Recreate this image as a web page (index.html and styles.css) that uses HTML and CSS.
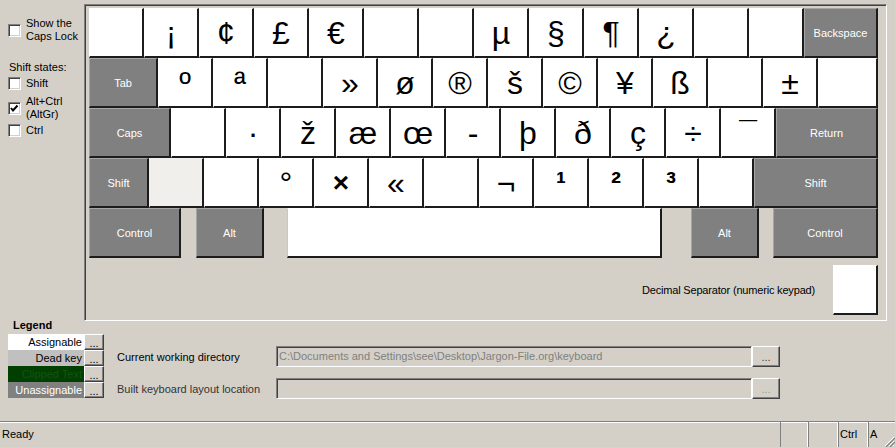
FILE: index.html
```html
<!DOCTYPE html>
<html lang="en">

<head>
    <meta charset="UTF-8">
    <title>Keyboard Layout Creator</title>
    <link rel="stylesheet" href="styles.css">
</head>

<body>
    <div class="app">
        <div class="top">
            <!-- Options column -->
            <div class="side">
                <div class="opt opt-caps">
                    <span class="box"></span>
                    <span>Show the<br>Caps Lock</span>
                </div>
                <div class="side-title">Shift states:</div>
                <div class="opt opt-shift">
                    <span class="box"></span>
                    <span>Shift</span>
                </div>
                <div class="opt opt-altgr">
                    <span class="box">
                        <svg width="11" height="11" viewBox="0 0 11 11"><path d="M2 5 L4 7.5 L8.5 2.5" fill="none" stroke="#000" stroke-width="2"/></svg>
                    </span>
                    <span>Alt+Ctrl<br>(AltGr)</span>
                </div>
                <div class="opt opt-ctrl">
                    <span class="box"></span>
                    <span>Ctrl</span>
                </div>
                <div class="legend-title">Legend</div>
            </div>

            <!-- Keyboard -->
            <div class="board">
                <div class="row">
                    <div class="key ch"></div>
                    <div class="key ch">¡</div>
                    <div class="key ch">¢</div>
                    <div class="key ch">£</div>
                    <div class="key ch">€</div>
                    <div class="key ch"></div>
                    <div class="key ch"></div>
                    <div class="key ch">µ</div>
                    <div class="key ch">§</div>
                    <div class="key ch">¶</div>
                    <div class="key ch">¿</div>
                    <div class="key ch"></div>
                    <div class="key ch"></div>
                    <div class="key mod bksp">Backspace</div>
                </div>
                <div class="row">
                    <div class="key mod tab">Tab</div>
                    <div class="key ch">º</div>
                    <div class="key ch">ª</div>
                    <div class="key ch"></div>
                    <div class="key ch">»</div>
                    <div class="key ch">ø</div>
                    <div class="key ch">®</div>
                    <div class="key ch">š</div>
                    <div class="key ch">©</div>
                    <div class="key ch">¥</div>
                    <div class="key ch">ß</div>
                    <div class="key ch"></div>
                    <div class="key ch">±</div>
                    <div class="key ch tail"></div>
                </div>
                <div class="row">
                    <div class="key mod caps">Caps</div>
                    <div class="key ch"></div>
                    <div class="key ch">·</div>
                    <div class="key ch">ž</div>
                    <div class="key ch">æ</div>
                    <div class="key ch">œ</div>
                    <div class="key ch">-</div>
                    <div class="key ch">þ</div>
                    <div class="key ch">ð</div>
                    <div class="key ch">ç</div>
                    <div class="key ch">÷</div>
                    <div class="key ch">¯</div>
                    <div class="key mod ret">Return</div>
                </div>
                <div class="row">
                    <div class="key mod lshift">Shift</div>
                    <div class="key ch dead"></div>
                    <div class="key ch"></div>
                    <div class="key ch">°</div>
                    <div class="key ch bold">×</div>
                    <div class="key ch">«</div>
                    <div class="key ch"></div>
                    <div class="key ch">¬</div>
                    <div class="key ch sup">¹</div>
                    <div class="key ch sup">²</div>
                    <div class="key ch sup">³</div>
                    <div class="key ch"></div>
                    <div class="key mod rshift">Shift</div>
                </div>
                <div class="row">
                    <div class="key mod lctrl">Control</div>
                    <div class="key mod alt lalt">Alt</div>
                    <div class="key space"></div>
                    <div class="key mod alt ralt">Alt</div>
                    <div class="key mod rctrl">Control</div>
                </div>
                <div class="dec">
                    <span class="dec-label">Decimal Separator (numeric keypad)</span>
                    <div class="key dec-key"></div>
                </div>
            </div>
        </div>

        <div class="bottom">
            <div class="legend">
                <div class="legend-row"><span class="swatch sw-assign">Assignable</span><span class="btn">...</span></div>
                <div class="legend-row"><span class="swatch sw-dead">Dead key</span><span class="btn">...</span></div>
                <div class="legend-row"><span class="swatch sw-clip">Clipped Text</span><span class="btn">...</span></div>
                <div class="legend-row"><span class="swatch sw-fixed">Unassignable</span><span class="btn">...</span></div>
            </div>
            <div class="paths">
                <div class="path-row">
                    <span class="path-label">Current working directory</span>
                    <span class="path-box">C:\Documents and Settings\see\Desktop\Jargon-File.org\keyboard</span>
                    <span class="btn path-btn">...</span>
                </div>
                <div class="path-row">
                    <span class="path-label dim">Built keyboard layout location</span>
                    <span class="path-box"></span>
                    <span class="btn path-btn off">...</span>
                </div>
            </div>
        </div>

        <div class="status">
            <div class="status-main">Ready</div>
            <div class="cell c1"></div>
            <div class="cell c2"></div>
            <div class="cell c3">Ctrl</div>
            <div class="cell c4">A
                <svg class="grip" width="12" height="12" viewBox="0 0 12 12">
                    <path d="M11 2 L2 11 M11 6 L6 11 M11 10 L10 11" stroke="#fff" stroke-width="1"/>
                    <path d="M12 3 L3 12 M12 7 L7 12" stroke="#808080" stroke-width="1.2"/>
                </svg>
            </div>
        </div>
    </div>
</body>

</html>
```

FILE: styles.css
```css
body {
    margin: 0px;
    padding: 0px;
    background: #d4d0c8;
    font-family: "Liberation Sans", Arial, sans-serif;
    font-size: 11px;
    color: #000;
    overflow: hidden;
}

.app {
    width: 895px;
    height: 447px;
    display: flex;
    flex-direction: column;
}

.top {
    display: flex;
    align-items: flex-start;
    height: 332px;
}

/* left options column */
.side {
    width: 84px;
    height: 332px;
    box-sizing: border-box;
    padding-left: 8px;
    display: flex;
    flex-direction: column;
    flex: none;
}

.opt {
    display: flex;
    align-items: center;
    gap: 5px;
    line-height: 13px;
}

.opt-caps {
    margin-top: 17px;
}

.side-title {
    margin: 18px 0 0 1px;
    line-height: 13px;
}

.opt-shift,
.opt-ctrl {
    margin-top: 3px;
}

.opt-altgr {
    margin-top: 5px;
}

.box {
    width: 13px;
    height: 13px;
    box-sizing: border-box;
    flex: none;
    background: #fff;
    border: 1px solid;
    border-color: #808080 #fff #fff #808080;
    box-shadow: inset 1px 1px #404040, inset -1px -1px #d4d0c8;
    display: flex;
    align-items: center;
    justify-content: center;
}

.legend-title {
    margin-top: auto;
    margin-left: 5px;
    font-weight: bold;
    line-height: 13px;
}

/* keyboard panel */
.board {
    margin-top: 4px;
    width: 803px;
    box-sizing: border-box;
    border: 1px solid;
    border-color: #808080 #fff #fff #808080;
    box-shadow: inset 1px 1px #404040;
    padding: 3px 0 5px 4px;
}

.row {
    display: flex;
    height: 50px;
}

.key {
    box-sizing: border-box;
    width: 55px;
    height: 50px;
    flex: none;
    background: #fff;
    border-style: solid;
    border-width: 1px 2px 2px 1px;
    border-color: #fff #1c1c1c #1c1c1c #fff;
}

.ch {
    font-size: 32px;
    line-height: 40px;
    padding-top: 4px;
    text-align: center;
}

.ch.bold {
    font-weight: bold;
    font-size: 28px;
}

.ch.sup {
    font-weight: bold;
    font-size: 30px;
}

.dead {
    background: #f0efeb;
    border-color: #f0efeb #1c1c1c #1c1c1c #f0efeb;
}

.mod {
    background: #808080;
    border-color: #a6a6a6 #1c1c1c #1c1c1c #a6a6a6;
    color: #fff;
    display: flex;
    align-items: center;
    justify-content: center;
}

.bksp { width: 74px; }
.tab { width: 69px; }
.tail { width: 60px; }
.caps { width: 82px; }
.ret { width: 102px; }
.lshift { width: 60px; }
.rshift { width: 124px; }
.lctrl { width: 92px; }
.alt { width: 68px; }
.rctrl { width: 105px; }

.lalt { margin-left: 15px; }
.ralt { margin-left: 29px; }
.rctrl { margin-left: 14px; }

.space {
    width: 375px;
    margin-left: 23px;
    border-color: #fff #1c1c1c #1c1c1c #c8c8c8;
}

.dec {
    display: flex;
    align-items: center;
    justify-content: flex-end;
    gap: 18px;
    width: 789px;
    margin-top: 7px;
}

.dec-label {
    letter-spacing: -0.18px;
}

.dec-key {
    width: 45px;
}

/* legend and paths */
.bottom {
    display: flex;
    flex: 1;
}

.legend {
    margin-left: 8px;
    padding-top: 2px;
}

.legend-row {
    display: flex;
    height: 16px;
}

.swatch {
    width: 76px;
    box-sizing: border-box;
    padding-right: 2px;
    text-align: right;
    line-height: 16px;
}

.sw-assign { background: #fff; }
.sw-dead { background: #c0c0c0; }
.sw-clip { background: #003f00; color: #125512; }
.sw-fixed { background: #808080; color: #fff; }

.btn {
    width: 20px;
    box-sizing: border-box;
    background: #d4d0c8;
    border: 1px solid;
    border-color: #fff #404040 #404040 #fff;
    box-shadow: inset -1px -1px #808080;
    display: flex;
    align-items: center;
    justify-content: center;
    line-height: 12px;
    padding-top: 1px;
}

.paths {
    margin-left: 13px;
    padding-top: 14px;
}

.path-row {
    display: flex;
    align-items: center;
    height: 21px;
}

.path-row + .path-row {
    margin-top: 11px;
}

.path-label {
    width: 159px;
}

.path-label.dim {
    color: #333;
}

.path-box {
    width: 476px;
    height: 21px;
    box-sizing: border-box;
    border: 1px solid;
    border-color: #808080 #fff #fff #808080;
    box-shadow: inset 1px 1px #404040, inset -1px -1px #d4d0c8;
    color: #808080;
    padding-left: 2px;
    line-height: 19px;
    white-space: nowrap;
    overflow: hidden;
}

.path-btn {
    width: 28px;
    height: 21px;
    color: #444;
}

.path-btn.off {
    color: #9a9a9a;
}

/* status bar */
.status {
    height: 26px;
    box-sizing: border-box;
    display: flex;
    border-top: 1px solid #808080;
    box-shadow: inset 0 1px #fff;
    line-height: 25px;
}

.status-main {
    flex: 1;
    padding-left: 2px;
}

.cell {
    box-sizing: border-box;
    border-left: 1px solid #808080;
    border-right: 1px solid #fff;
    padding-left: 1px;
}

.c1 { width: 28px; }
.c2 { width: 30px; }
.c3 { width: 30px; }
.c4 {
    width: 27px;
    position: relative;
    border-right: none;
}

.grip {
    position: absolute;
    right: 0px;
    bottom: 0px;
}
```
